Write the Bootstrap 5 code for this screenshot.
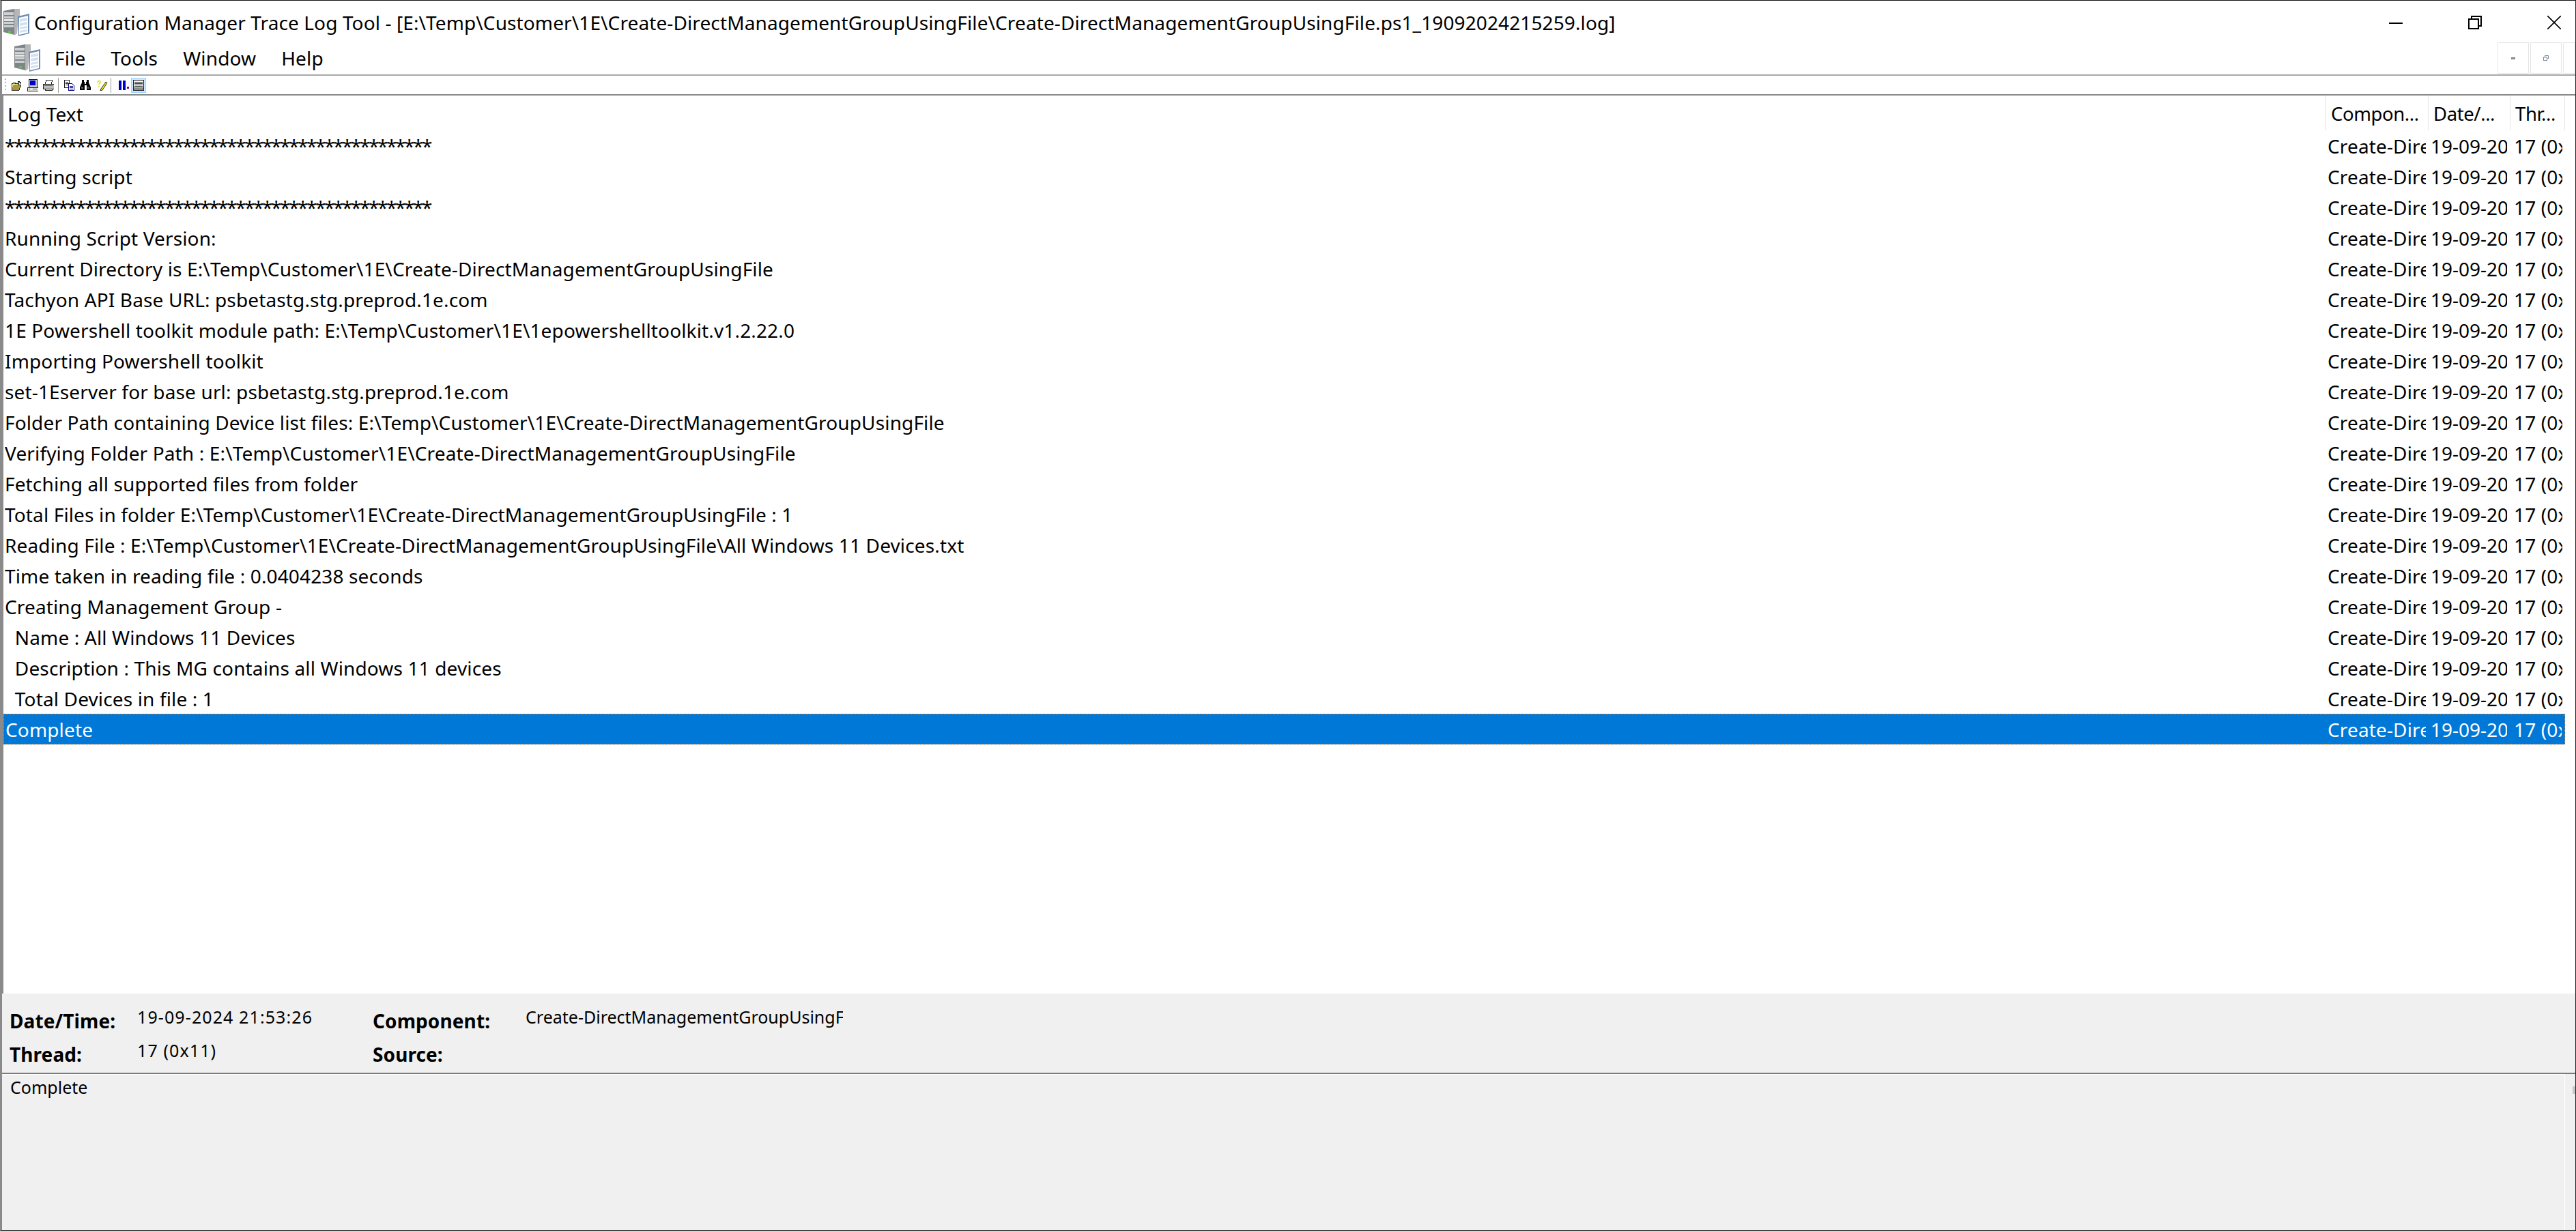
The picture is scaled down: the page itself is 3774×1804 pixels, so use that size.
<!DOCTYPE html>
<html lang="en">
<head>
<meta charset="utf-8">
<title>Configuration Manager Trace Log Tool</title>
<link href="https://cdn.jsdelivr.net/npm/bootstrap@5.3.0/dist/css/bootstrap.min.css" rel="stylesheet">
<style>
html,body{height:100%;margin:0;background:#fff;overflow:hidden}
body{font-family:"Noto Sans","Open Sans","Liberation Sans",sans-serif;color:#000;font-size:28px;letter-spacing:.14px}
.appwin{height:1804px;border-top:1px solid #111;border-bottom:1px solid #111;border-right:1px solid #222;border-left:3px solid #8a8a8a}
.titlebar{height:55px;padding:9px 0 0 2px}
.titlebar .ttl{margin-left:7px;font-size:28px;letter-spacing:.11px;line-height:46px;white-space:nowrap}
.wctl{width:20px;height:20px;display:block}
.wctls{gap:96px;padding-right:21px}
.menubar{height:55px;border-bottom:2px solid #a8a8a8;padding:5px 0 0 18px}
.appgap{margin-right:21px}
.menubar .mi{line-height:48px;margin-right:37px}
.mdi{width:46px;height:46px;border:1px solid #e6e6e6;margin-right:2px;align-self:flex-start;margin-top:1px}
.mdi:last-child{margin-right:0;width:18px}
.toolbar{height:27px;padding-left:4px}
.grip{width:2px;height:20px;margin-right:8px;background-image:linear-gradient(#b5b5b5 50%,transparent 50%);background-size:2px 5px}
.tsep{width:1px;height:22px;background:#9a9a9a}
.tbtn{width:22px;height:22px;background:#cce8ff;border:1px solid #99d1ff}
.ga3{margin-right:3px}.ga4{margin-right:4px}.ga6{margin-right:6px}.ga7{margin-right:7px}.ga8{margin-right:8px}.ga9{margin-right:9px}.ga11{margin-right:11px}
.logwrap{border-top:2px solid #8a8a8a;border-left:2px solid #8a8a8a;min-height:0}
.logtable{table-layout:fixed;width:3753px;border-collapse:separate;border-spacing:0;margin:0}
.logtable th{height:51px;font-weight:400;padding:3px 0 0 6px;border-right:1px solid #e4e4e4;white-space:nowrap;overflow:hidden}
.logtable th+th{font-size:27.5px;letter-spacing:-.4px;padding-left:7px}
.logtable td{height:45px;padding:2px 0 0;white-space:pre;line-height:43px;overflow:hidden}
.logtable td.c1{padding-left:2px}
.logtable td .clip{display:block;overflow:hidden}
.logtable td .starline{letter-spacing:-2.43px}
.logtable td.c2{padding-left:2px;padding-right:4px}
.logtable td.c3{padding-left:3px;padding-right:5px;letter-spacing:0}
.logtable td.c4{padding-left:5px;padding-right:4px}
.logtable tr.picked td{background:#0078d7;color:#fff;border-top:1px dotted #d08030;border-bottom:1px dotted #d08030;line-height:41px}
.logtable tr.picked td:first-child{border-left:1px dotted #d08030}
.logtable tr.picked td:last-child{border-right:1px dotted #d08030}
.detail{background:#f0f0f0;height:116px}
.dgrid{display:grid;grid-template-columns:187px 345px 224px 465px;grid-auto-rows:49px;padding:11px 0 0 11px}
.dl{font-weight:700;font-size:28px;line-height:49px;letter-spacing:.1px;padding-top:5px;white-space:nowrap}
.dv{font-size:25px;line-height:47px;letter-spacing:0;white-space:nowrap;overflow:hidden}
.dv.numval{letter-spacing:1.1px}
.msgpane{background:#f0f0f0;border-top:2px solid #7a7a7a;height:231px}
.msgtxt{flex:0 0 3755px;padding:1px 0 0 12px;font-size:25px;letter-spacing:0;line-height:36px;border-right:1px solid #fff;box-shadow:inset 0 1px 0 #fff}
.sgrip{width:5px;height:11px;background:#c8c8c8;margin-top:18px;margin-left:11px}
</style>
</head>
<body>
<svg width="0" height="0" class="d-block position-absolute" aria-hidden="true">
<defs>
<symbol id="appico" viewBox="0 0 38 40">
<path d="M0 3 16 0v38L0 34Z" fill="#7f8488"/>
<path d="M1 5h14v4H1zM1 11h14v3H1zM1 19h14v3H1zM1 24h14v3H1z" fill="#cfd2d4"/>
<path d="M1 15h14v3H1z" fill="#e6e7e8"/>
<path d="M16 0h8v10l-2 2-2 24-4 3Z" fill="#b4b6b8"/>
<rect x="7" y="32" width="4" height="3" fill="#58c83c"/>
<path d="M21 11 38 7v29l-16 4Z" fill="#6f8db5"/>
<path d="M23 13 36 10v25l-13 3Z" fill="#fff"/>
<path d="M24 15l11-2v4l-11 2zM24 21l11-2v4l-11 2zM24 27l11-2v3l-11 2zM24 32l11-2v3l-11 2z" fill="#d3e0ee"/>
</symbol>
</defs>
</svg>
<div class="appwin d-flex flex-column">
  <header class="titlebar d-flex align-items-center flex-shrink-0">
    <svg width="38" height="40" class="flex-shrink-0"><use href="#appico"/></svg>
    <div class="ttl flex-grow-1">Configuration Manager Trace Log Tool - [E:\Temp\Customer\1E\Create-DirectManagementGroupUsingFile\Create-DirectManagementGroupUsingFile.ps1_19092024215259.log]</div>
    <div class="wctls d-flex">
      <svg class="wctl" viewBox="0 0 20 20"><rect x="0" y="10" width="20" height="2"/></svg>
      <svg class="wctl" viewBox="0 0 20 20" fill="none" stroke="#000" stroke-width="2"><rect x="1" y="5" width="14" height="14"/><path d="M5 5V1h14v14h-4"/></svg>
      <svg class="wctl" viewBox="0 0 20 20" fill="none" stroke="#000" stroke-width="1.6"><path d="M0 0 20 20M20 0 0 20"/></svg>
    </div>
  </header>
  <nav class="menubar d-flex align-items-center flex-shrink-0">
    <svg width="38" height="40" class="flex-shrink-0 appgap"><use href="#appico"/></svg>
    <span class="mi">File</span><span class="mi">Tools</span><span class="mi">Window</span><span class="mi">Help</span>
    <div class="ms-auto d-flex align-self-stretch">
      <div class="mdi d-flex align-items-center justify-content-center"><svg width="6" height="3"><rect width="6" height="3" fill="#7f8a99"/></svg></div>
      <div class="mdi d-flex align-items-center justify-content-center"><svg width="8" height="8" viewBox="0 0 8 8" fill="none" stroke="#7f8a99"><rect x=".5" y="3" width="5" height="4.500"/><path d="M2.500 3V.5h5v4.500H6"/></svg></div>
      <div class="mdi"></div>
    </div>
  </nav>
  <div class="toolbar d-flex align-items-center flex-shrink-0">
    <div class="grip"></div>
    <svg width="16" height="16" viewBox="0 0 16 16" shape-rendering="crispEdges" class="ga7"><path d="M0 5h2v-1h3v1h5v2h4l-3 8H0Z" fill="#a89a3c" stroke="#000" stroke-width=".8"/><path d="M1 6h8v1H3l-2 6Z" fill="#f5f0a0"/><path d="M9 2h3v1h2v3h-1V4h-4Z" fill="#111"/></svg>
    <svg width="16" height="18" viewBox="0 0 16 18" shape-rendering="crispEdges" class="ga7"><rect x="2" y="0" width="12" height="12" fill="#c8c8c8" stroke="#222"/><rect x="4" y="2" width="8" height="7" fill="#0000c8"/><rect x="0" y="12" width="16" height="5" fill="#e4e4e4" stroke="#222"/><rect x="2" y="14" width="2" height="1" fill="#1a9a1a"/><rect x="8" y="14" width="6" height="1" fill="#555"/></svg>
    <svg width="16" height="16" viewBox="0 0 16 16" shape-rendering="crispEdges" class="ga6"><path d="M5 0h9l-2 6H3Z" fill="#fff" stroke="#222"/><path d="M0 6h16v7H0Z" fill="#bdbdbd" stroke="#222"/><rect x="2" y="8" width="12" height="1" fill="#666"/><rect x="9" y="10" width="4" height="1" fill="#d8c030"/><path d="M3 13h10v2H3Z" fill="#fff" stroke="#222"/></svg>
    <div class="tsep ga8"></div>
    <svg width="16" height="16" viewBox="0 0 16 16" shape-rendering="crispEdges" class="ga7"><path d="M.5.5h7v11h-7Z" fill="#fff" stroke="#222"/><path d="M2 3h4M2 5h4M2 7h4" stroke="#222"/><path d="M6.500 5.500h5l3 3v7h-8Z" fill="#fff" stroke="#00007a"/><path d="M8 9h5M8 11h5M8 13h5" stroke="#00007a"/></svg>
    <svg width="16" height="15" viewBox="0 0 16 15" class="ga9"><path d="M3 0h3v3h1v3h2V3h1V0h3v4l3 7v4h-6V8H7v7H0v-4l3-7Z" fill="#000"/><path d="M2 10h3v3H2zM11 10h3v3h-3z" fill="#555"/></svg>
    <svg width="16" height="16" viewBox="0 0 16 16" class="ga4"><path d="M1 4c0-3 4-3 4-1 0 2-2 2-2 4M3 9v2" fill="none" stroke="#d8d800" stroke-width="1.500"/><path d="M6 13 13 3l2 1.500L8 15l-3 1Z" fill="#e8e800" stroke="#000" stroke-width=".8"/></svg>
    <div class="tsep ga11"></div>
    <svg width="15" height="14" viewBox="0 0 15 14" shape-rendering="crispEdges" class="ga3"><rect x="0" width="4" height="14" fill="#0000c8"/><rect x="6" width="4" height="14" fill="#0000c8"/><rect x="12" y="9" width="3" height="3" fill="#800080"/></svg>
    <div class="tbtn d-flex align-items-center justify-content-center"><svg width="16" height="16" viewBox="0 0 16 16" shape-rendering="crispEdges"><rect x=".5" y=".5" width="15" height="15" fill="#f4f4f4" stroke="#222"/><path d="M2 3h12M2 5h12M2 7h12M2 9h12" stroke="#333"/><rect x="1" y="11" width="14" height="4" fill="#8c8c8c"/></svg></div>
  </div>
  <div class="logwrap flex-grow-1 bg-white overflow-hidden">
    <table class="logtable">
      <colgroup><col style="width:3403px"><col style="width:150px"><col style="width:120px"><col style="width:80px"></colgroup>
      <thead><tr><th>Log Text</th><th>Compon...</th><th>Date/...</th><th>Thr...</th></tr></thead>
      <tbody id="rows"></tbody>
    </table>
  </div>
  <section class="detail flex-shrink-0">
    <div class="dgrid">
      <div class="dl">Date/Time:</div><div class="dv numval">19-09-2024 21:53:26</div><div class="dl">Component:</div><div class="dv">Create-DirectManagementGroupUsingF</div>
      <div class="dl">Thread:</div><div class="dv numval">17 (0x11)</div><div class="dl">Source:</div><div class="dv"></div>
    </div>
  </section>
  <section class="msgpane d-flex flex-shrink-0">
    <div class="msgtxt">Complete</div>
    <div class="sgrip"></div>
  </section>
</div>
<script>
var lines=["************************************************","Starting script","************************************************","Running Script Version:","Current Directory is E:\\Temp\\Customer\\1E\\Create-DirectManagementGroupUsingFile","Tachyon API Base URL: psbetastg.stg.preprod.1e.com","1E Powershell toolkit module path: E:\\Temp\\Customer\\1E\\1epowershelltoolkit.v1.2.22.0","Importing Powershell toolkit","set-1Eserver for base url: psbetastg.stg.preprod.1e.com","Folder Path containing Device list files: E:\\Temp\\Customer\\1E\\Create-DirectManagementGroupUsingFile","Verifying Folder Path : E:\\Temp\\Customer\\1E\\Create-DirectManagementGroupUsingFile","Fetching all supported files from folder","Total Files in folder E:\\Temp\\Customer\\1E\\Create-DirectManagementGroupUsingFile : 1","Reading File : E:\\Temp\\Customer\\1E\\Create-DirectManagementGroupUsingFile\\All Windows 11 Devices.txt","Time taken in reading file : 0.0404238 seconds","Creating Management Group -","  Name : All Windows 11 Devices","  Description : This MG contains all Windows 11 devices","  Total Devices in file : 1","Complete"];
var b=document.getElementById("rows");
lines.forEach(function(t,i){
  var tr=document.createElement("tr"); if(i===lines.length-1)tr.className="picked";
  [["c1",t],["c2","Create-DirectManagementGroupUsingFile"],["c3","19-09-2024 21:53:26"],["c4","17 (0x11)"]].forEach(function(c,k){
    var td=document.createElement("td");td.className=c[0];
    var s=document.createElement("span");s.className="clip"+(k===0&&t.charAt(0)==="*"?" starline":"");s.textContent=c[1];td.appendChild(s);tr.appendChild(td);
  });
  b.appendChild(tr);
});
</script>
<script src="https://cdn.jsdelivr.net/npm/bootstrap@5.3.0/dist/js/bootstrap.bundle.min.js"></script>
</body>
</html>
